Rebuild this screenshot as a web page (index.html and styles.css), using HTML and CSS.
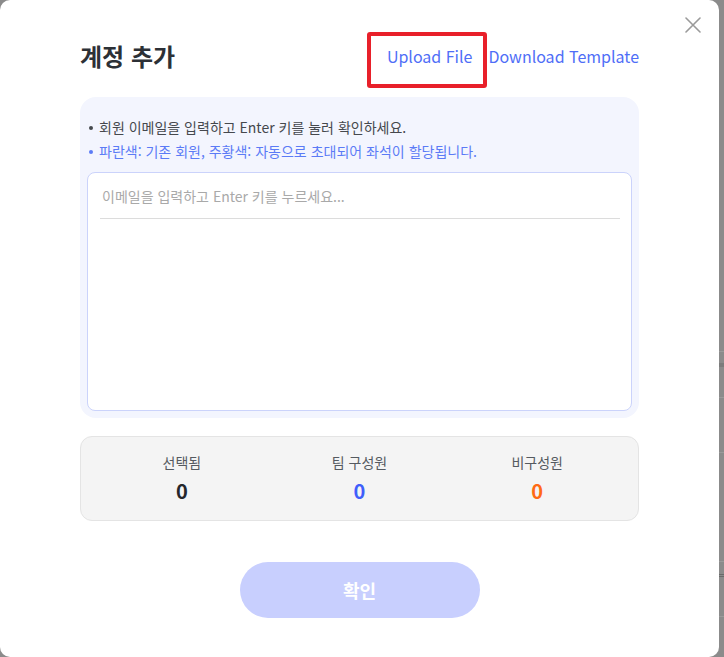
FILE: index.html
```html
<!DOCTYPE html>
<html lang="ko">
<head>
<meta charset="utf-8">
<title>계정 추가</title>
<link rel="stylesheet" href="styles.css">
</head>
<body>
<div class="screen">
  <div class="modal">
    <button class="close" aria-label="닫기">
      <svg width="16" height="16" viewBox="0 0 16 16"><path d="M1 1L15 15M15 1L1 15" stroke="#9a9a9a" stroke-width="1.6" fill="none" stroke-linecap="round"/></svg>
    </button>
    <div class="header">
      <h1 class="title">계정 추가</h1>
      <div class="actions">
        <a class="link upload">Upload File</a>
        <a class="link download">Download Template</a>
      </div>
    </div>
    <div class="panel">
      <ul class="notes">
        <li class="note">회원 이메일을 입력하고 Enter 키를 눌러 확인하세요.</li>
        <li class="note note-blue">파란색: 기존 회원, 주황색: 자동으로 초대되어 좌석이 할당됩니다.</li>
      </ul>
      <div class="email-box">
        <div class="email-input">이메일을 입력하고 Enter 키를 누르세요...</div>
      </div>
    </div>
    <div class="stats">
      <div class="stat">
        <div class="stat-label">선택됨</div>
        <div class="stat-value">0</div>
      </div>
      <div class="stat">
        <div class="stat-label">팀 구성원</div>
        <div class="stat-value blue">0</div>
      </div>
      <div class="stat">
        <div class="stat-label">비구성원</div>
        <div class="stat-value orange">0</div>
      </div>
    </div>
    <div class="footer">
      <button class="confirm">확인</button>
    </div>
  </div>
  <div class="backdrop-strip">
    <div class="row r1"></div>
    <div class="row r2"></div>
    <div class="row r3"></div>
    <div class="row r4"></div>
    <div class="row r5"></div>
    <div class="row r6"></div>
    <div class="row r7"></div>
  </div>
</div>
</body>
</html>
```
FILE: styles.css
```css
* { box-sizing: border-box; }
html, body {
  margin: 0;
  padding: 0;
}
body {
  width: 724px;
  height: 657px;
  overflow: hidden;
  background: #8b8b8b;
  font-family: "Noto Sans CJK KR", "Noto Sans", sans-serif;
}
.screen {
  display: flex;
  width: 724px;
  height: 657px;
}
.modal {
  position: relative;
  flex: 0 0 719px;
  height: 657px;
  background: #fff;
  border-radius: 10px;
  padding: 32px 80px 0 80px;
  display: flex;
  flex-direction: column;
}
.close {
  position: absolute;
  top: 17px;
  right: 18px;
  width: 16px;
  height: 16px;
  padding: 0;
  border: 0;
  background: none;
  display: flex;
}
.header {
  display: flex;
  justify-content: space-between;
  align-items: center;
  height: 56px;
}
.title {
  margin: -9px 0 0 0;
  font-size: 24px;
  font-weight: 700;
  color: #2c3036;
  line-height: 30px;
}
.actions {
  display: flex;
  align-items: center;
  height: 56px;
}
.link {
  font-size: 16px;
  color: #4f6ef7;
  line-height: 24px;
  cursor: pointer;
}
.upload {
  height: 56px;
  border: 4px solid #e8202a;
  border-radius: 3px;
  padding: 8px 11px 0 16px;
}
.download {
  margin-left: 1px;
  margin-top: -8px;
}
.panel {
  margin-top: 9px;
  height: 321px;
  background: #f3f5fe;
  border-radius: 16px;
  padding: 18px 7px 7px 7px;
  display: flex;
  flex-direction: column;
}
.notes {
  list-style: none;
  margin: 0;
  padding: 0 0 0 1px;
}
.note {
  position: relative;
  font-size: 14px;
  line-height: 24px;
  color: #45484d;
  padding-left: 11px;
}
.note::before {
  content: "";
  position: absolute;
  left: 1px;
  top: 11px;
  width: 4px;
  height: 4px;
  border-radius: 50%;
  background: currentColor;
}
.note-blue {
  color: #5b7bf6;
}
.email-box {
  margin-top: 9px;
  flex: 1;
  background: #fff;
  border: 1px solid #cbd3fb;
  border-radius: 8px;
  padding: 0 11px 0 12px;
}
.email-input {
  height: 46px;
  border-bottom: 1px solid #dcdcdc;
  padding: 12px 0 0 2px;
  font-size: 14px;
  line-height: 22px;
  color: #a9a9a9;
}
.stats {
  margin-top: 18px;
  height: 85px;
  background: #f4f4f4;
  border: 1px solid #e4e4e4;
  border-radius: 12px;
  padding: 15px 12px 0 12px;
  display: grid;
  grid-template-columns: repeat(3, 1fr);
}
.stat {
  display: flex;
  flex-direction: column;
  align-items: center;
}
.stat-label {
  font-size: 14px;
  line-height: 20px;
  color: #555a60;
}
.stat-value {
  margin-top: 5px;
  font-size: 20px;
  font-weight: 700;
  line-height: 28px;
  color: #25272b;
}
.stat-value.blue { color: #3f5efb; }
.stat-value.orange { color: #ff6a14; }
.footer {
  margin-top: 41px;
  display: flex;
  justify-content: center;
}
.confirm {
  width: 240px;
  height: 56px;
  border: 0;
  border-radius: 28px;
  background: #c8cffe;
  color: #fff;
  font-family: "Noto Sans CJK KR", "Noto Sans", sans-serif;
  font-size: 18px;
  font-weight: 700;
}
.backdrop-strip {
  flex: 1;
  display: flex;
  flex-direction: column;
}
.row { border-bottom: 1px solid #9a9a9a; }
.r1 { height: 352px; }
.r2 { height: 15px; border-bottom: 4px solid #7c7c7c; }
.r3 { height: 31px; }
.r4 { height: 55px; }
.r5 { height: 109px; }
.r6 { height: 15px; border-bottom: 3px double #6a6a6a; }
.r7 { height: 40px; }
```
